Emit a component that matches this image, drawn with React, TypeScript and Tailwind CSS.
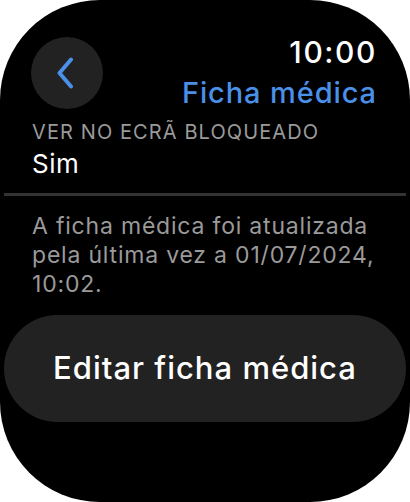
import React from 'react';

const font = { fontFamily: 'Inter, "Noto Sans", sans-serif' };

const App = () => {
  return (
    <div className="w-[410px] h-[502px] bg-white" style={font}>
      <div className="w-full h-full bg-black rounded-[100px] overflow-hidden flex flex-col">
        {/* topo */}
        <div className="flex justify-between pl-[31px] pr-[33px] pt-[34px]">
          <button className="w-[72px] h-[72px] mt-[3px] rounded-full bg-[#222222] flex items-center justify-center">
            <svg className="mr-[5px]" width="22" height="32" viewBox="0 0 22 32" fill="none">
              <path d="M17 2.5 L5.5 16 L17 29.5" stroke="#4a8fe8" strokeWidth="4" strokeLinecap="round" strokeLinejoin="round" />
            </svg>
          </button>
          <div className="flex flex-col items-end">
            <div className="text-[30px] leading-[36px] font-medium text-white tracking-[1.6px]">10:00</div>
            <div className="text-[29px] leading-[36px] font-medium text-[#4a8fe8] mt-[5px] tracking-[0.9px]">Ficha médica</div>
          </div>
        </div>

        <div className="px-[32px] mt-[9px]">
          <div className="text-[20px] leading-[24px] text-[#9a9a9a] tracking-[1.1px]">VER NO ECRÃ BLOQUEADO</div>
          <div className="text-[26px] leading-[32px] text-white mt-[4px] tracking-[0.5px]">Sim</div>
        </div>

        <div className="mx-[4px] mt-[13px] h-[3px] bg-[#333333]" />

        <div className="px-[32px] mt-[16px] text-[23px] leading-[29px] text-[#9a9a9a] tracking-[0.8px]">
          A ficha médica foi atualizada pela última vez a 01/07/2024, 10:02.
        </div>

        <div className="px-[4px] mt-[16px]">
          <button className="w-full h-[107px] rounded-full bg-[#222222] text-white text-[31px] font-medium tracking-[1px]">
            Editar ficha médica
          </button>
        </div>
      </div>
    </div>
  );
};

export default App;
